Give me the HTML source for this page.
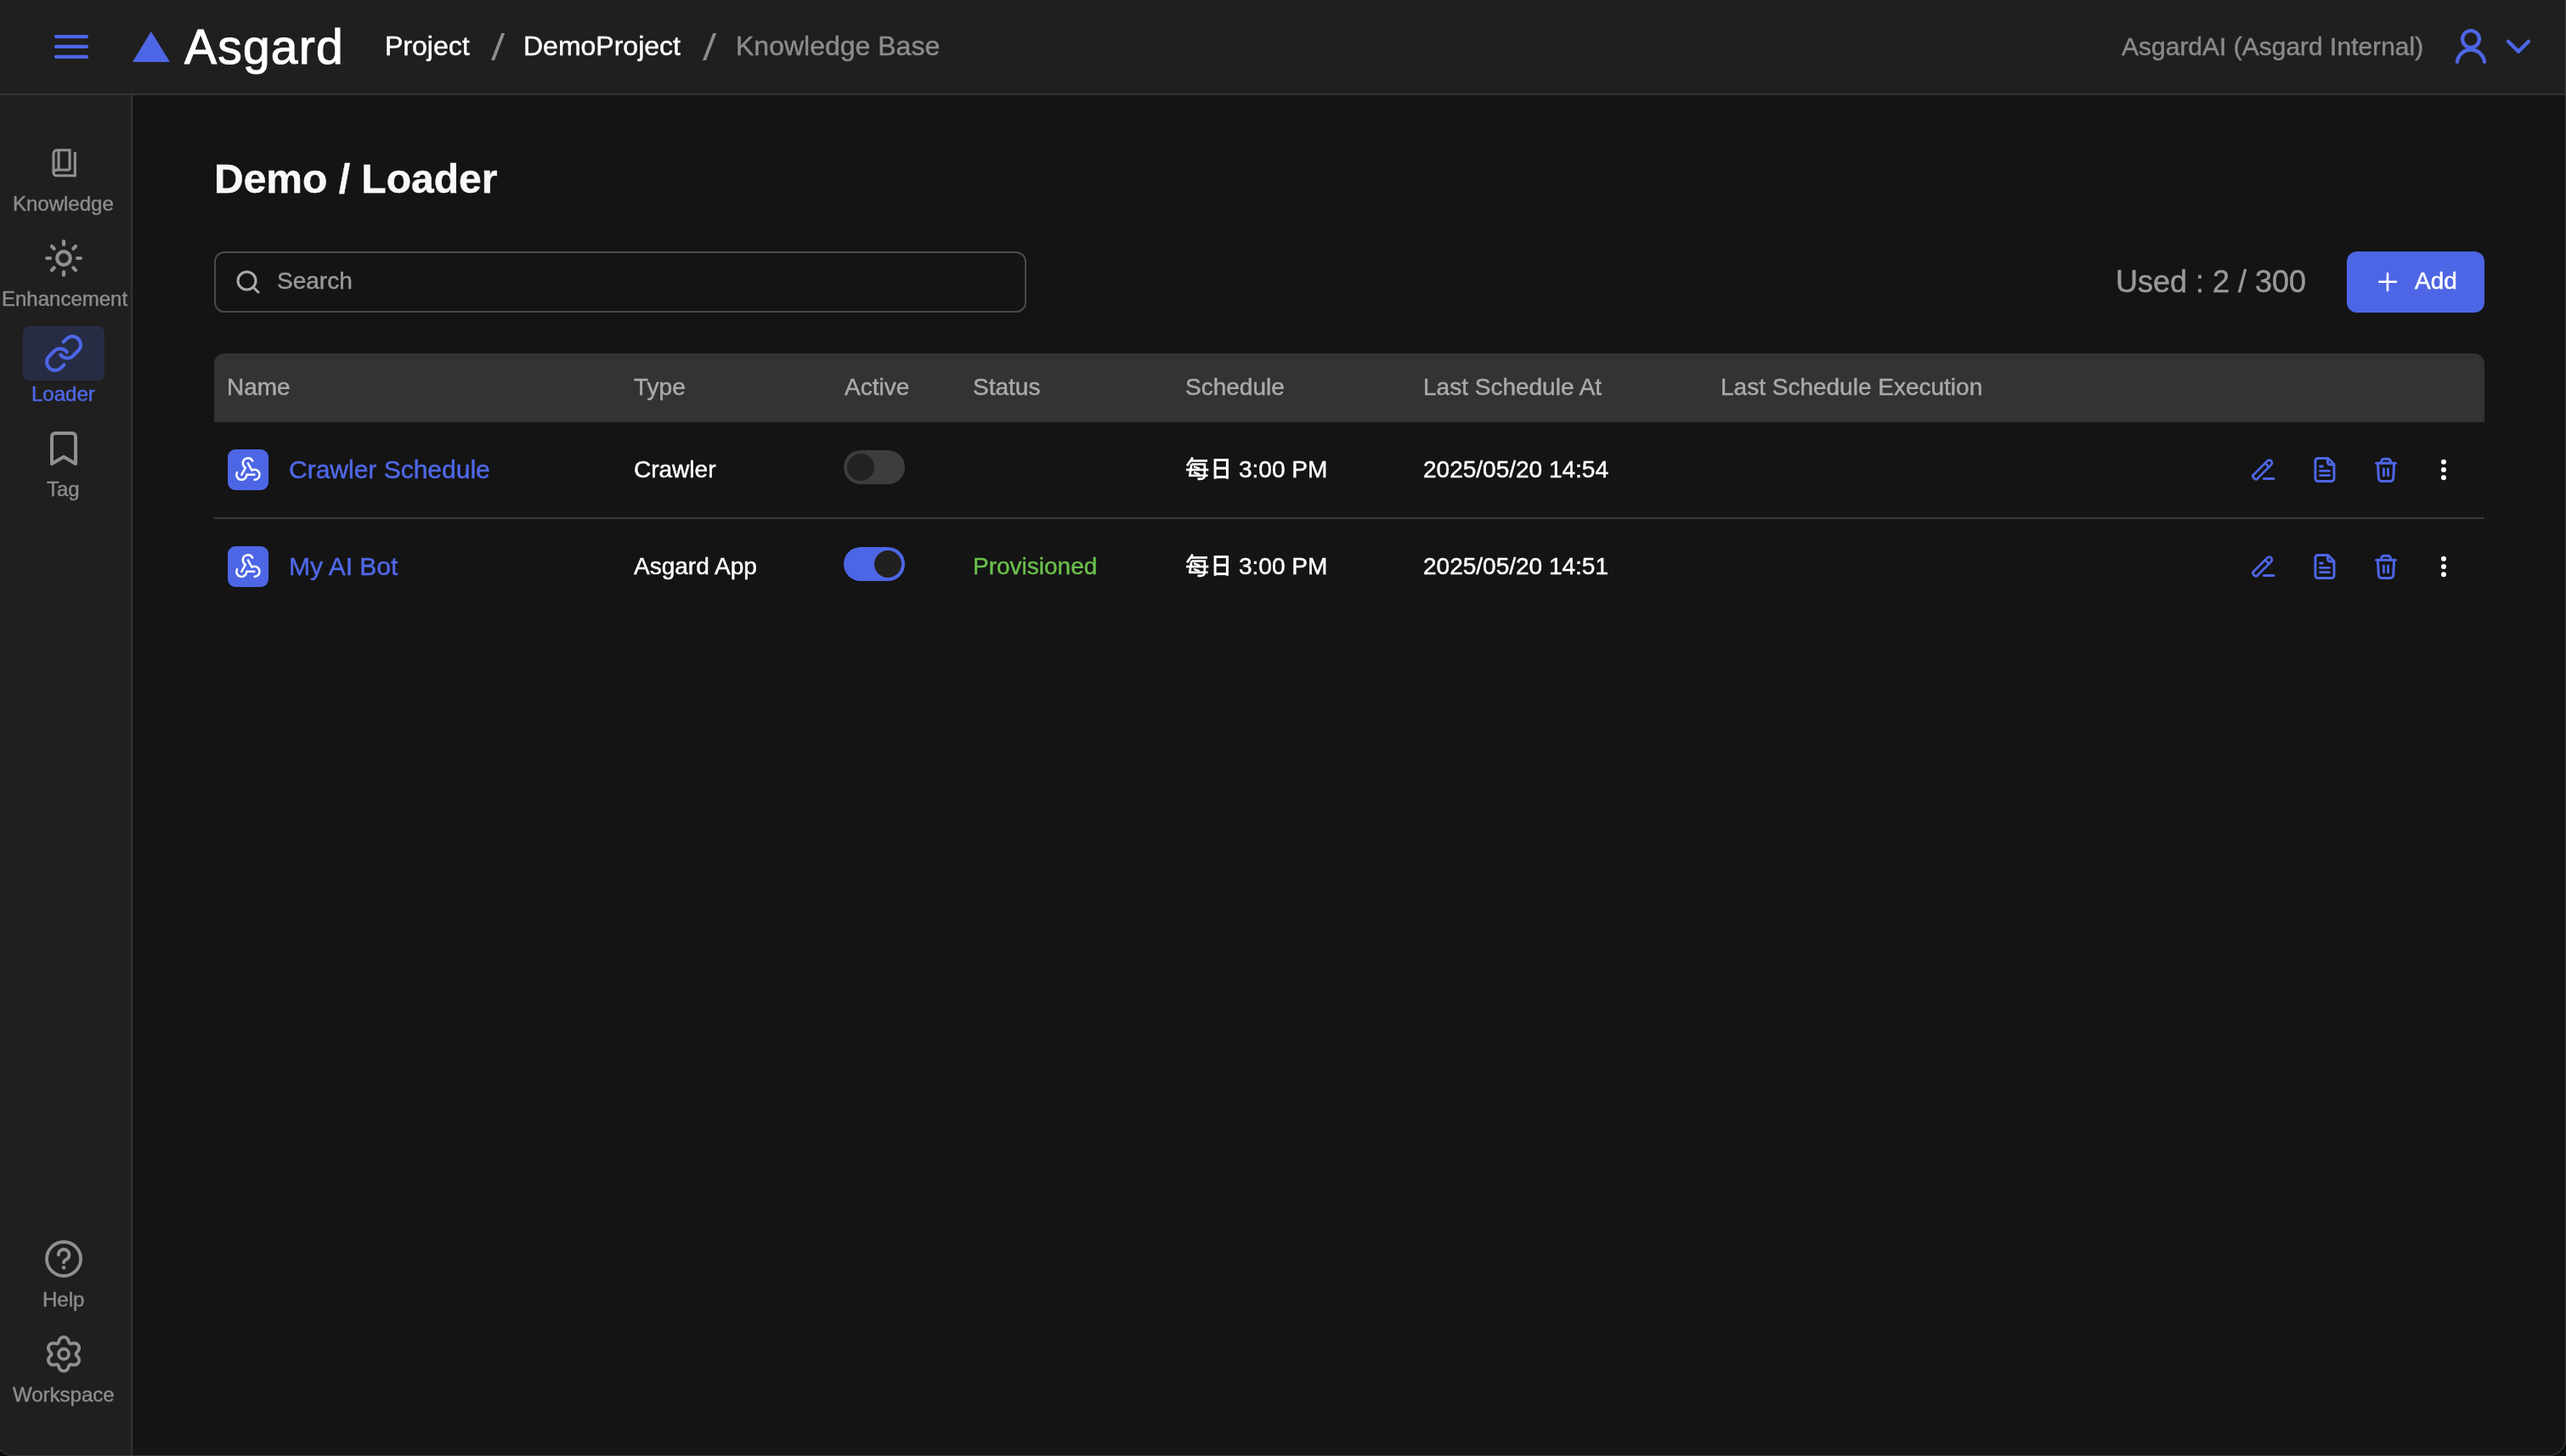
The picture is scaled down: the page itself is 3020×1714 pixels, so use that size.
<!DOCTYPE html>
<html>
<head>
<meta charset="utf-8">
<style>
html,body{margin:0;padding:0;}
body{width:3020px;height:1714px;overflow:hidden;background:#0d1210;font-family:"Liberation Sans",sans-serif;position:relative;-webkit-font-smoothing:antialiased;}
#win{position:absolute;left:0;top:0;width:3020px;height:1714px;background:#141414;overflow:hidden;}
.t{position:absolute;white-space:nowrap;line-height:1;will-change:transform;-webkit-text-stroke:0.45px currentColor;}
svg{position:absolute;overflow:visible;}
#hdr{position:absolute;left:0;top:0;width:3020px;height:110px;background:#1f1f1f;border-bottom:2px solid #333;}
#side{position:absolute;left:0;top:112px;width:154px;height:1602px;background:#1f1f1f;border-right:2px solid #333;}
.tog{position:absolute;width:72px;height:40px;border-radius:20px;}
.knob{position:absolute;top:4px;width:32px;height:32px;border-radius:16px;}
</style>
</head>
<body>
<div id="win">
  <div id="hdr"></div>
  <div id="side"></div>

  <div class="t" style="left:217px;top:27px;font-size:57px;color:#fff;letter-spacing:1.2px;-webkit-text-stroke:1.1px #fff;">Asgard</div>
  <div class="t" style="left:453px;top:38px;font-size:32px;color:#fff;">Project</div>
  <div class="t" style="left:616px;top:38px;font-size:32px;color:#fff;">DemoProject</div>
  <div class="t" style="left:866px;top:38px;font-size:32px;color:#8c8c8c;">Knowledge Base</div>
  <div class="t" style="left:2497px;top:40px;font-size:30px;color:#8a8a8a;">AsgardAI (Asgard Internal)</div>

  <div class="t" style="left:252px;top:187px;font-size:48px;font-weight:bold;color:#f8f8f8;">Demo / Loader</div>

  <div style="position:absolute;left:252px;top:296px;width:952px;height:68px;border:2px solid #4a4a4a;border-radius:12px;"></div>
  <div class="t" style="left:326px;top:317px;font-size:28px;color:#999;">Search</div>
  <div class="t" style="left:2490px;top:314px;font-size:36px;color:#999;">Used : 2 / 300</div>
  <div style="position:absolute;left:2762px;top:296px;width:162px;height:72px;background:#4d66e5;border-radius:12px;"></div>
  <div class="t" style="left:2842px;top:317px;font-size:28px;color:#fff;">Add</div>

  <div style="position:absolute;left:252px;top:416px;width:2672px;height:81px;background:#333;border-radius:12px 12px 0 0;"></div>
  <div class="t" style="left:267px;top:441.5px;font-size:28px;color:#aaa;">Name</div>
  <div class="t" style="left:746px;top:441.5px;font-size:28px;color:#aaa;">Type</div>
  <div class="t" style="left:994px;top:441.5px;font-size:28px;color:#aaa;">Active</div>
  <div class="t" style="left:1145px;top:441.5px;font-size:28px;color:#aaa;">Status</div>
  <div class="t" style="left:1395px;top:441.5px;font-size:28px;color:#aaa;">Schedule</div>
  <div class="t" style="left:1675px;top:441.5px;font-size:28px;color:#aaa;">Last Schedule At</div>
  <div class="t" style="left:2025px;top:441.5px;font-size:28px;color:#aaa;">Last Schedule Execution</div>

  <div style="position:absolute;left:252px;top:609px;width:2672px;height:2px;background:#3a3a3a;"></div>

  <div style="position:absolute;left:268px;top:529px;width:48px;height:48px;background:#4d66e5;border-radius:9px;"></div>
  <div class="t" style="left:340px;top:538px;font-size:30px;color:#5068e8;">Crawler Schedule</div>
  <div class="t" style="left:746px;top:539px;font-size:28px;color:#fff;">Crawler</div>
  <div class="tog" style="left:993px;top:530px;background:#3d3d3d;"><div class="knob" style="left:4px;background:#222;"></div></div>
  <div class="t" style="left:1458px;top:539px;font-size:28px;color:#fff;">3:00 PM</div>
  <div class="t" style="left:1675px;top:539px;font-size:28px;color:#fff;">2025/05/20 14:54</div>

  <div style="position:absolute;left:268px;top:643px;width:48px;height:48px;background:#4d66e5;border-radius:9px;"></div>
  <div class="t" style="left:340px;top:652px;font-size:30px;color:#5068e8;">My AI Bot</div>
  <div class="t" style="left:746px;top:653px;font-size:28px;color:#fff;">Asgard App</div>
  <div class="tog" style="left:993px;top:644px;background:#4d66e5;"><div class="knob" style="left:36px;background:#202020;"></div></div>
  <div class="t" style="left:1145px;top:653px;font-size:28px;color:#6abf4b;">Provisioned</div>
  <div class="t" style="left:1458px;top:653px;font-size:28px;color:#fff;">3:00 PM</div>
  <div class="t" style="left:1675px;top:653px;font-size:28px;color:#fff;">2025/05/20 14:51</div>

  <div class="t" style="left:15px;top:228px;font-size:24px;color:#8c8c8c;">Knowledge</div>
  <div class="t" style="left:2px;top:340px;font-size:24px;color:#8c8c8c;">Enhancement</div>
  <div style="position:absolute;left:27px;top:384px;width:96px;height:64px;background:#272c45;border-radius:8px;"></div>
  <div class="t" style="left:37px;top:452px;font-size:24px;color:#5068e8;">Loader</div>
  <div class="t" style="left:55px;top:564px;font-size:24px;color:#8c8c8c;">Tag</div>
  <div class="t" style="left:50px;top:1518px;font-size:24px;color:#8c8c8c;">Help</div>
  <div class="t" style="left:15px;top:1630px;font-size:24px;color:#8c8c8c;">Workspace</div>

<svg style="left:0;top:0" width="3020" height="1714">
  <g stroke="#4d66e5" stroke-width="4.2" stroke-linecap="round">
    <line x1="66" y1="43.1" x2="102" y2="43.1"/>
    <line x1="66" y1="54.9" x2="102" y2="54.9"/>
    <line x1="66" y1="66.9" x2="102" y2="66.9"/>
  </g>
  <polygon points="177.8,37 200,73 156,73" fill="#4d66e5"/>
  <polygon points="590.2,39 594.2,39 582,71 578,71" fill="#8c8c8c"/>
  <polygon points="839.2,39 843.2,39 831,71 827,71" fill="#8c8c8c"/>
  <g fill="none" stroke="#4d66e5" stroke-width="4.3" stroke-linecap="round" stroke-linejoin="round">
    <circle cx="2908" cy="46" r="9.9"/>
    <path d="M2892,72.8 A16.1,16.1 0 0 1 2924,72.8"/>
    <polyline points="2952,48.8 2964,60.6 2976,48.8"/>
  </g>
  <!-- sidebar icons -->
  <g fill="none" stroke="#909090" stroke-width="3.1" stroke-linecap="round" stroke-linejoin="round">
    <path d="M82,200 V176.8 H67 a4,4 0 0 0 -4,4 V203" stroke-linecap="butt" stroke-linejoin="miter"/>
    <path d="M82,200 H67 a4,3.5 0 0 0 -4,3.5 a3.3,3.3 0 0 0 3.5,3.2 H88.3 V179" stroke-linecap="butt" stroke-linejoin="miter"/>
    <line x1="69" y1="177" x2="69" y2="200"/>
  </g>
  <g fill="none" stroke="#909090" stroke-width="4.2" stroke-linecap="round">
    <circle cx="75" cy="304" r="7.8"/>
    <line x1="75" y1="284.2" x2="75" y2="288"/>
    <line x1="75" y1="320" x2="75" y2="323.8"/>
    <line x1="55.2" y1="304" x2="59" y2="304"/>
    <line x1="91" y1="304" x2="94.8" y2="304"/>
    <line x1="61" y1="290" x2="63.7" y2="292.7"/>
    <line x1="86.3" y1="315.3" x2="89" y2="318"/>
    <line x1="89" y1="290" x2="86.3" y2="292.7"/>
    <line x1="63.7" y1="315.3" x2="61" y2="318"/>
  </g>
  <path d="M74.54,402.67 L78.25,398.96 L78.25,398.96 L78.88,398.38 L79.55,397.87 L80.27,397.41 L81.03,397.02 L81.81,396.69 L82.62,396.44 L83.45,396.25 L84.30,396.14 L85.15,396.10 L86.00,396.14 L86.84,396.25 L87.67,396.44 L88.48,396.69 L89.27,397.02 L90.02,397.41 L90.74,397.87 L91.41,398.38 L92.04,398.96 L92.62,399.59 L93.13,400.26 L93.59,400.98 L93.98,401.73 L94.31,402.52 L94.56,403.33 L94.75,404.16 L94.86,405.00 L94.90,405.85 L94.86,406.70 L94.75,407.55 L94.56,408.38 L94.31,409.19 L93.98,409.97 L93.59,410.73 L93.13,411.45 L92.62,412.12 L92.04,412.75 L86.10,418.69 L86.10,418.69 L85.70,419.07 L85.27,419.43 L84.82,419.76 L84.36,420.07 L83.88,420.35 L83.38,420.60 L82.87,420.83 L82.35,421.02 L81.81,421.19 L81.27,421.32 L80.73,421.42 L80.17,421.49 L79.62,421.53 L79.06,421.54 L78.50,421.52 L77.95,421.46 L77.40,421.37 L76.85,421.25 L76.31,421.10 L75.79,420.92 L75.27,420.71 L74.77,420.47 L74.28,420.21 L73.81,419.91 L73.35,419.59 L72.91,419.24 L72.50,418.87 L72.11,418.47 L71.74,418.06 L71.39,417.62 M75.46,429.33 L71.75,433.04 L71.75,433.04 L71.12,433.62 L70.45,434.13 L69.73,434.59 L68.97,434.98 L68.19,435.31 L67.38,435.56 L66.55,435.75 L65.70,435.86 L64.85,435.90 L64.00,435.86 L63.16,435.75 L62.33,435.56 L61.52,435.31 L60.73,434.98 L59.98,434.59 L59.26,434.13 L58.59,433.62 L57.96,433.04 L57.38,432.41 L56.87,431.74 L56.41,431.02 L56.02,430.27 L55.69,429.48 L55.44,428.67 L55.25,427.84 L55.14,427.00 L55.10,426.15 L55.14,425.30 L55.25,424.45 L55.44,423.62 L55.69,422.81 L56.02,422.03 L56.41,421.27 L56.87,420.55 L57.38,419.88 L57.96,419.25 L63.90,413.31 L63.90,413.31 L64.30,412.93 L64.73,412.57 L65.18,412.24 L65.64,411.93 L66.12,411.65 L66.62,411.40 L67.13,411.17 L67.65,410.98 L68.19,410.81 L68.73,410.68 L69.27,410.58 L69.83,410.51 L70.38,410.47 L70.94,410.46 L71.50,410.48 L72.05,410.54 L72.60,410.63 L73.15,410.75 L73.69,410.90 L74.21,411.08 L74.73,411.29 L75.23,411.53 L75.72,411.79 L76.19,412.09 L76.65,412.41 L77.09,412.76 L77.50,413.13 L77.89,413.53 L78.26,413.94 L78.61,414.38" fill="none" stroke="#4d66e5" stroke-width="4.1" stroke-linecap="round" stroke-linejoin="round"/>
  <path d="M61,546 V514 a4,4 0 0 1 4,-4 H85 a4,4 0 0 1 4,4 V546 L75,537.8 Z" fill="none" stroke="#909090" stroke-width="4" stroke-linejoin="round"/>
  <g fill="none" stroke="#909090" stroke-width="3.8" stroke-linecap="round" stroke-linejoin="round">
    <circle cx="75" cy="1482" r="20"/>
    <path d="M68.8,1477.2 a6.3,6.3 0 1 1 9.6,5.3 Q75,1484 75,1486.3"/>
    <path d="M75.00,1574.05 L75.52,1574.07 L76.04,1574.13 L76.56,1574.23 L77.06,1574.38 L77.56,1574.59 L78.03,1574.85 L78.49,1575.18 L78.91,1575.58 L79.31,1576.04 L79.67,1576.57 L80.00,1577.13 L80.28,1577.74 L80.54,1578.36 L80.77,1578.98 L80.98,1579.57 L81.18,1580.12 L81.39,1580.61 L81.62,1581.02 L81.87,1581.34 L82.17,1581.57 L82.53,1581.72 L82.94,1581.78 L83.41,1581.77 L83.93,1581.71 L84.51,1581.61 L85.13,1581.49 L85.78,1581.38 L86.44,1581.29 L87.11,1581.24 L87.76,1581.24 L88.39,1581.29 L88.99,1581.40 L89.55,1581.57 L90.06,1581.80 L90.53,1582.08 L90.96,1582.41 L91.34,1582.77 L91.69,1583.16 L92.00,1583.58 L92.28,1584.03 L92.52,1584.49 L92.73,1584.97 L92.90,1585.46 L93.02,1585.98 L93.09,1586.51 L93.10,1587.05 L93.04,1587.61 L92.91,1588.18 L92.71,1588.76 L92.43,1589.33 L92.10,1589.89 L91.73,1590.44 L91.32,1590.98 L90.90,1591.48 L90.49,1591.96 L90.11,1592.41 L89.79,1592.84 L89.55,1593.24 L89.40,1593.62 L89.35,1594.00 L89.40,1594.38 L89.55,1594.76 L89.79,1595.16 L90.11,1595.59 L90.49,1596.04 L90.90,1596.52 L91.32,1597.02 L91.73,1597.56 L92.10,1598.11 L92.43,1598.67 L92.71,1599.24 L92.91,1599.82 L93.04,1600.39 L93.10,1600.95 L93.09,1601.49 L93.02,1602.02 L92.90,1602.54 L92.73,1603.03 L92.52,1603.51 L92.28,1603.97 L92.00,1604.42 L91.69,1604.84 L91.34,1605.23 L90.96,1605.59 L90.53,1605.92 L90.06,1606.20 L89.55,1606.43 L88.99,1606.60 L88.39,1606.71 L87.76,1606.76 L87.11,1606.76 L86.44,1606.71 L85.78,1606.62 L85.13,1606.51 L84.51,1606.39 L83.93,1606.29 L83.41,1606.23 L82.94,1606.22 L82.53,1606.28 L82.17,1606.43 L81.87,1606.66 L81.62,1606.98 L81.39,1607.39 L81.18,1607.88 L80.98,1608.43 L80.77,1609.02 L80.54,1609.64 L80.28,1610.26 L80.00,1610.87 L79.67,1611.43 L79.31,1611.96 L78.91,1612.42 L78.49,1612.82 L78.03,1613.15 L77.56,1613.41 L77.06,1613.62 L76.56,1613.77 L76.04,1613.87 L75.52,1613.93 L75.00,1613.95 L74.48,1613.93 L73.96,1613.87 L73.44,1613.77 L72.94,1613.62 L72.44,1613.41 L71.97,1613.15 L71.51,1612.82 L71.09,1612.42 L70.69,1611.96 L70.33,1611.43 L70.00,1610.87 L69.72,1610.26 L69.46,1609.64 L69.23,1609.02 L69.02,1608.43 L68.82,1607.88 L68.61,1607.39 L68.38,1606.98 L68.13,1606.66 L67.83,1606.43 L67.47,1606.28 L67.06,1606.22 L66.59,1606.23 L66.07,1606.29 L65.49,1606.39 L64.87,1606.51 L64.22,1606.62 L63.56,1606.71 L62.89,1606.76 L62.24,1606.76 L61.61,1606.71 L61.01,1606.60 L60.45,1606.43 L59.94,1606.20 L59.47,1605.92 L59.04,1605.59 L58.66,1605.23 L58.31,1604.84 L58.00,1604.42 L57.72,1603.97 L57.48,1603.51 L57.27,1603.03 L57.10,1602.54 L56.98,1602.02 L56.91,1601.49 L56.90,1600.95 L56.96,1600.39 L57.09,1599.82 L57.29,1599.24 L57.57,1598.67 L57.90,1598.11 L58.27,1597.56 L58.68,1597.02 L59.10,1596.52 L59.51,1596.04 L59.89,1595.59 L60.21,1595.16 L60.45,1594.76 L60.60,1594.38 L60.65,1594.00 L60.60,1593.62 L60.45,1593.24 L60.21,1592.84 L59.89,1592.41 L59.51,1591.96 L59.10,1591.48 L58.68,1590.98 L58.27,1590.44 L57.90,1589.89 L57.57,1589.33 L57.29,1588.76 L57.09,1588.18 L56.96,1587.61 L56.90,1587.05 L56.91,1586.51 L56.98,1585.98 L57.10,1585.46 L57.27,1584.97 L57.48,1584.49 L57.72,1584.03 L58.00,1583.58 L58.31,1583.16 L58.66,1582.77 L59.04,1582.41 L59.47,1582.08 L59.94,1581.80 L60.45,1581.57 L61.01,1581.40 L61.61,1581.29 L62.24,1581.24 L62.89,1581.24 L63.56,1581.29 L64.22,1581.38 L64.87,1581.49 L65.49,1581.61 L66.07,1581.71 L66.59,1581.77 L67.06,1581.78 L67.47,1581.72 L67.83,1581.57 L68.13,1581.34 L68.38,1581.02 L68.61,1580.61 L68.82,1580.12 L69.02,1579.57 L69.23,1578.98 L69.46,1578.36 L69.72,1577.74 L70.00,1577.13 L70.33,1576.57 L70.69,1576.04 L71.09,1575.58 L71.51,1575.18 L71.97,1574.85 L72.44,1574.59 L72.94,1574.38 L73.44,1574.23 L73.96,1574.13 L74.48,1574.07Z"/>
    <circle cx="75" cy="1594" r="6"/>
  </g>
  <circle cx="75" cy="1492.3" r="2.3" fill="#909090"/>
  <!-- search -->
  <g fill="none" stroke="#aaa" stroke-width="3" stroke-linecap="round">
    <circle cx="290.5" cy="330.5" r="10.5"/>
    <line x1="298.2" y1="338.2" x2="304" y2="344"/>
  </g>
  <g stroke="#fff" stroke-width="2.6" stroke-linecap="round">
    <line x1="2800.3" y1="331.8" x2="2819.9" y2="331.8"/>
    <line x1="2810" y1="322" x2="2810" y2="342"/>
  </g>
  <g transform="translate(273.85,533.35) scale(1.5)" fill="none" stroke="#fff" stroke-width="1.65" stroke-linecap="round" stroke-linejoin="round"><path d="M3.44 15.18a4 4 0 1 0 7.56 1.82h6"/><path d="M17.2 21a4 4 0 0 0 -.2 -8c-.706 0 -1.424 .179 -2 .5l-3 -5.5"/><path d="M15.6 6.25a4 4 0 0 0 -7.6 1.75c0 1.506 .77 2.818 2 3.5l-3 5.5"/></g>
  <g transform="translate(273.85,647.35) scale(1.5)" fill="none" stroke="#fff" stroke-width="1.65" stroke-linecap="round" stroke-linejoin="round"><path d="M3.44 15.18a4 4 0 1 0 7.56 1.82h6"/><path d="M17.2 21a4 4 0 0 0 -.2 -8c-.706 0 -1.424 .179 -2 .5l-3 -5.5"/><path d="M15.6 6.25a4 4 0 0 0 -7.6 1.75c0 1.506 .77 2.818 2 3.5l-3 5.5"/></g>
  <g transform="translate(0,0)" fill="none" stroke="#fff" stroke-width="2.7" stroke-linecap="butt"><line x1="1403.8" y1="538.6" x2="1397" y2="548.2"/><line x1="1401.5" y1="542.4" x2="1421" y2="542.4"/><path d="M1402.5,546.5 H1417.8 V560 Q1417.5,563.8 1413,563.8 H1409.5"/><line x1="1402.3" y1="546.5" x2="1400.3" y2="560"/><line x1="1396" y1="553" x2="1422.3" y2="553"/><line x1="1399" y1="559.8" x2="1421.5" y2="559.8"/><line x1="1405" y1="549.2" x2="1411.8" y2="551.6" stroke-width="2.4"/><line x1="1405" y1="555.8" x2="1411.8" y2="558.3" stroke-width="2.4"/><path d="M1430.1,563.8 V541.4 H1444.4 V563.8" stroke-width="3"/><line x1="1430" y1="551.2" x2="1444.4" y2="551.2" stroke-width="3"/><line x1="1430" y1="561.6" x2="1444.4" y2="561.6" stroke-width="3"/></g>
  <g transform="translate(0,114)" fill="none" stroke="#fff" stroke-width="2.7" stroke-linecap="butt"><line x1="1403.8" y1="538.6" x2="1397" y2="548.2"/><line x1="1401.5" y1="542.4" x2="1421" y2="542.4"/><path d="M1402.5,546.5 H1417.8 V560 Q1417.5,563.8 1413,563.8 H1409.5"/><line x1="1402.3" y1="546.5" x2="1400.3" y2="560"/><line x1="1396" y1="553" x2="1422.3" y2="553"/><line x1="1399" y1="559.8" x2="1421.5" y2="559.8"/><line x1="1405" y1="549.2" x2="1411.8" y2="551.6" stroke-width="2.4"/><line x1="1405" y1="555.8" x2="1411.8" y2="558.3" stroke-width="2.4"/><path d="M1430.1,563.8 V541.4 H1444.4 V563.8" stroke-width="3"/><line x1="1430" y1="551.2" x2="1444.4" y2="551.2" stroke-width="3"/><line x1="1430" y1="561.6" x2="1444.4" y2="561.6" stroke-width="3"/></g>
  <g transform="translate(0,0)" fill="none" stroke="#4d66e5" stroke-linecap="round" stroke-linejoin="round">
<g transform="translate(2663.3,552.3) rotate(-45)" stroke-width="2.7"><path d="M-14,-3.2 H10.5 A3.2,3.2 0 0 1 10.5,3.2 H-14 Q-16.2,0 -14,-3.2 Z"/><line x1="6.8" y1="-3.2" x2="6.8" y2="3.2"/></g>
<line x1="2664.5" y1="563.6" x2="2676" y2="563.6" stroke-width="3"/>
<path d="M2740,539.5 H2728 a3,3 0 0 0 -3,3 V563.5 a3,3 0 0 0 3,3 H2744 a3,3 0 0 0 3,-3 V546.5 Z" stroke-width="3"/>
<path d="M2739.5,540 V544 a3,3 0 0 0 3,3 H2746.5" stroke-width="3"/>
<line x1="2730.5" y1="549" x2="2733.5" y2="549" stroke-width="2.8"/>
<line x1="2730.5" y1="554.3" x2="2741.5" y2="554.3" stroke-width="2.8"/>
<line x1="2730.5" y1="559.6" x2="2741.5" y2="559.6" stroke-width="2.8"/>
<line x1="2796.6" y1="545.2" x2="2819.4" y2="545.2" stroke-width="3"/>
<path d="M2802.6,545 V543.5 a3.2,3.2 0 0 1 3.2,-3.2 H2810.4 a3.2,3.2 0 0 1 3.2,3.2 V545" stroke-width="3"/>
<path d="M2798.6,546 L2799.4,562.5 a4,4 0 0 0 4,4 H2812.8 a4,4 0 0 0 4,-4 L2817.6,546" stroke-width="3"/>
<line x1="2805.5" y1="552" x2="2805.5" y2="560" stroke-width="2.8"/>
<line x1="2810.6" y1="552" x2="2810.6" y2="560" stroke-width="2.8"/>
</g>
<g transform="translate(0,0)"><circle cx="2876" cy="553" r="33" fill="#151515"/><circle cx="2876" cy="543.7" r="3" fill="#fff"/><circle cx="2876" cy="553" r="3" fill="#fff"/><circle cx="2876" cy="562.3" r="3" fill="#fff"/></g>
  <g transform="translate(0,114)" fill="none" stroke="#4d66e5" stroke-linecap="round" stroke-linejoin="round">
<g transform="translate(2663.3,552.3) rotate(-45)" stroke-width="2.7"><path d="M-14,-3.2 H10.5 A3.2,3.2 0 0 1 10.5,3.2 H-14 Q-16.2,0 -14,-3.2 Z"/><line x1="6.8" y1="-3.2" x2="6.8" y2="3.2"/></g>
<line x1="2664.5" y1="563.6" x2="2676" y2="563.6" stroke-width="3"/>
<path d="M2740,539.5 H2728 a3,3 0 0 0 -3,3 V563.5 a3,3 0 0 0 3,3 H2744 a3,3 0 0 0 3,-3 V546.5 Z" stroke-width="3"/>
<path d="M2739.5,540 V544 a3,3 0 0 0 3,3 H2746.5" stroke-width="3"/>
<line x1="2730.5" y1="549" x2="2733.5" y2="549" stroke-width="2.8"/>
<line x1="2730.5" y1="554.3" x2="2741.5" y2="554.3" stroke-width="2.8"/>
<line x1="2730.5" y1="559.6" x2="2741.5" y2="559.6" stroke-width="2.8"/>
<line x1="2796.6" y1="545.2" x2="2819.4" y2="545.2" stroke-width="3"/>
<path d="M2802.6,545 V543.5 a3.2,3.2 0 0 1 3.2,-3.2 H2810.4 a3.2,3.2 0 0 1 3.2,3.2 V545" stroke-width="3"/>
<path d="M2798.6,546 L2799.4,562.5 a4,4 0 0 0 4,4 H2812.8 a4,4 0 0 0 4,-4 L2817.6,546" stroke-width="3"/>
<line x1="2805.5" y1="552" x2="2805.5" y2="560" stroke-width="2.8"/>
<line x1="2810.6" y1="552" x2="2810.6" y2="560" stroke-width="2.8"/>
</g>
<g transform="translate(0,114)"><circle cx="2876" cy="553" r="33" fill="#151515"/><circle cx="2876" cy="543.7" r="3" fill="#fff"/><circle cx="2876" cy="553" r="3" fill="#fff"/><circle cx="2876" cy="562.3" r="3" fill="#fff"/></g>
</svg>

<svg style="left:0;top:0" width="3020" height="1714">
  <path d="M0,1714 V1706.5 A20,20 0 0 0 15,1714 Z" fill="#0b100e"/>
  <path d="M3020,1714 V1693.5 A20.5,20.5 0 0 1 2999.5,1714 Z" fill="#0b100e"/>
  <path d="M0,1706.3 A20,20 0 0 0 15,1713.5 H2999.5 A20,20 0 0 0 3019.5,1693.5 V0" fill="none" stroke="#3a3a3a" stroke-width="1.2"/>
</svg>
</div>
</body>
</html>
